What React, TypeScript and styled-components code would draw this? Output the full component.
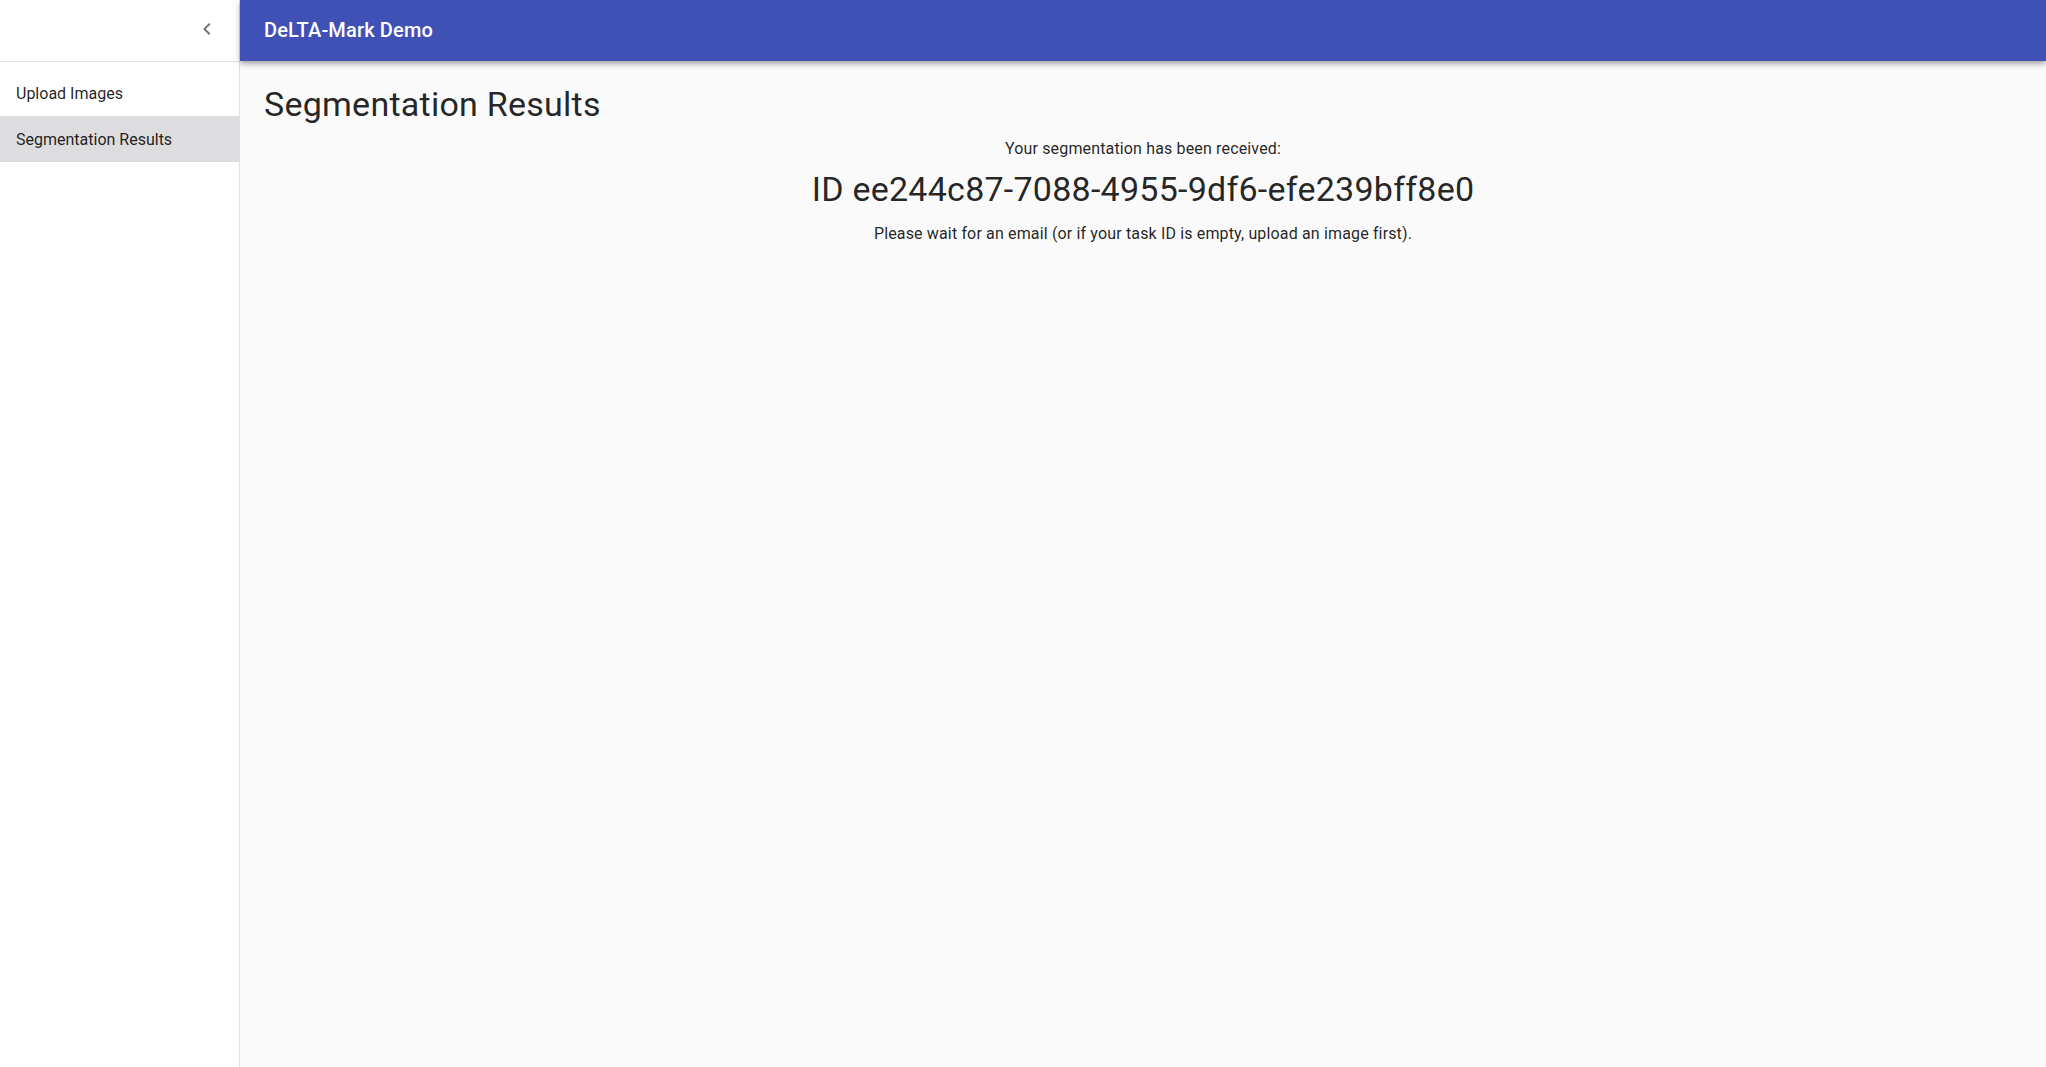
import React from "react";
import styled, { createGlobalStyle } from "styled-components";

const GlobalStyle = createGlobalStyle`
  html, body {
    margin: 0;
    padding: 0;
    height: 100%;
    background: #fafafa;
    font-family: Roboto, "Liberation Sans", Arial, sans-serif;
    color: rgba(0, 0, 0, 0.87);
  }
  #root { height: 100%; }
  * { box-sizing: border-box; }
`;

const Layout = styled.div`
  display: flex;
  height: 100vh;
  width: 100vw;
  overflow: hidden;
`;

const Drawer = styled.aside`
  width: 240px;
  flex: 0 0 240px;
  background: #ffffff;
  border-right: 1px solid rgba(0, 0, 0, 0.12);
  display: flex;
  flex-direction: column;
`;

const DrawerHeader = styled.div`
  height: 62px;
  display: flex;
  align-items: center;
  justify-content: flex-end;
  padding: 0 8px;
  border-bottom: 1px solid rgba(0, 0, 0, 0.12);
`;

const IconButton = styled.button`
  width: 48px;
  height: 48px;
  padding: 12px;
  border: none;
  background: transparent;
  border-radius: 50%;
  display: flex;
  align-items: center;
  justify-content: center;
  color: rgba(0, 0, 0, 0.54);
  cursor: pointer;
  margin-top: -3px;
`;

const NavList = styled.ul`
  list-style: none;
  margin: 0;
  padding: 8px 0 0;
`;

const NavItem = styled.li<{ $selected?: boolean }>`
  height: 46px;
  display: flex;
  align-items: center;
  padding: 2px 16px 0;
  font-size: 16px;
  line-height: 24px;
  color: rgba(0, 0, 0, 0.87);
  background: ${(p) => (p.$selected ? "#dddcdf" : "transparent")};
  cursor: pointer;
`;

const Main = styled.div`
  flex: 1;
  display: flex;
  flex-direction: column;
  min-width: 0;
`;

const AppBar = styled.header`
  height: 61px;
  flex: 0 0 61px;
  background: #3f51b5;
  color: #ffffff;
  display: flex;
  align-items: center;
  padding: 0 24px;
  box-shadow: 0px 2px 4px -1px rgba(0, 0, 0, 0.2),
    0px 4px 5px 0px rgba(0, 0, 0, 0.14), 0px 1px 10px 0px rgba(0, 0, 0, 0.12);
  position: relative;
  z-index: 1;
`;

const Title = styled.h1`
  margin: 0 0 2px;
  font-size: 20px;
  font-weight: 500;
  letter-spacing: 0.0075em;
  line-height: 1.6;
`;

const Content = styled.main`
  flex: 1;
  padding: 22px 24px 24px;
  background: #fafafa;
`;

const PageHeading = styled.h2`
  margin: 0;
  font-size: 34px;
  font-weight: 400;
  line-height: 42px;
  letter-spacing: 0.00735em;
`;

const Result = styled.section`
  display: flex;
  flex-direction: column;
  align-items: center;
  text-align: center;
  margin-top: 12px;
`;

const Body = styled.p<{ $gapTop?: number }>`
  margin: ${(p) => p.$gapTop ?? 0}px 0 0;
  font-size: 16px;
  line-height: 24px;
  letter-spacing: 0.00938em;
`;

const TaskId = styled.div`
  margin-top: 7px;
  font-size: 34px;
  line-height: 42px;
  font-weight: 400;
  letter-spacing: 0.00735em;
`;

export default function App() {
  return (
    <>
      <GlobalStyle />
      <Layout>
        <Drawer>
          <DrawerHeader>
            <IconButton aria-label="close drawer">
              <svg width="24" height="24" viewBox="0 0 24 24" fill="currentColor">
                <path d="M15.41 7.41 14 6l-6 6 6 6 1.41-1.41L10.83 12z" />
              </svg>
            </IconButton>
          </DrawerHeader>
          <NavList>
            <NavItem>Upload Images</NavItem>
            <NavItem $selected>Segmentation Results</NavItem>
          </NavList>
        </Drawer>
        <Main>
          <AppBar>
            <Title>DeLTA-Mark Demo</Title>
          </AppBar>
          <Content>
            <PageHeading>Segmentation Results</PageHeading>
            <Result>
              <Body>Your segmentation has been received:</Body>
              <TaskId>ID ee244c87-7088-4955-9df6-efe239bff8e0</TaskId>
              <Body $gapTop={12}>
                Please wait for an email (or if your task ID is empty, upload an image first).
              </Body>
            </Result>
          </Content>
        </Main>
      </Layout>
    </>
  );
}
